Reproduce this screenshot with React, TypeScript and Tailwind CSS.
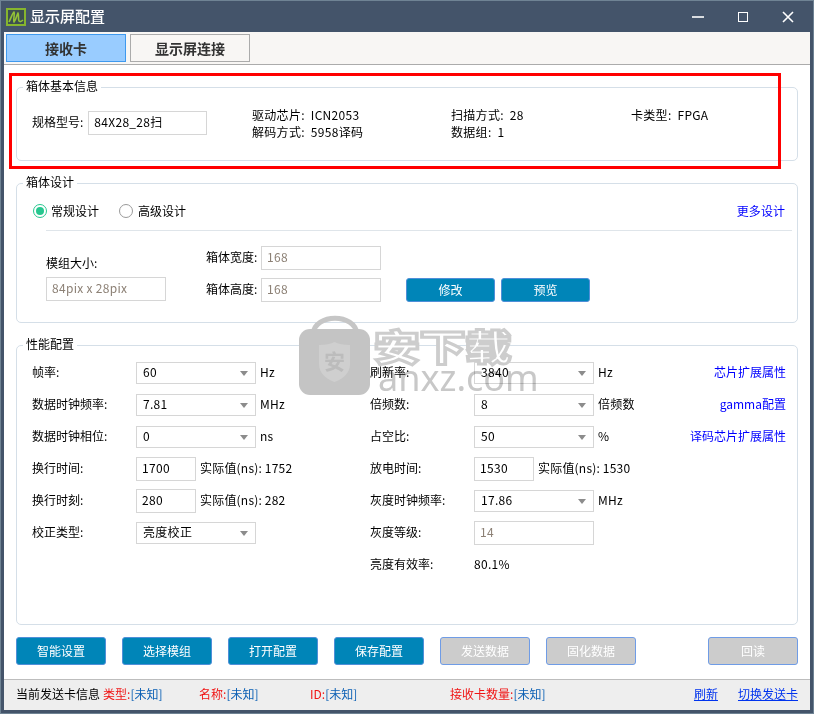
const FONT = "font-['Noto_Sans_CJK_SC','Noto_Sans',sans-serif]";

const Field = ({ value, width, height = "h-6", muted }: { value: string; width: string; height?: string; muted?: boolean }) => (
  <div className={`${width} ${height} flex items-center px-[5px] pb-[2px] border border-[#d6d6d6] bg-white tracking-[0.3px] ${muted ? "text-[#8c8075]" : "text-black"}`}>
    {value}
  </div>
);

const Select = ({ value }: { value: string }) => (
  <div className="w-[120px] h-[22px] flex items-center justify-between pl-[6px] pr-[3px] border border-[#d6d6d6] bg-white tracking-[0.3px]">
    <span className="pb-[2px]">{value}</span>
    <span className="mr-[4px] w-0 h-0 border-x-[4px] border-x-transparent border-t-[5px] border-t-[#8c8c8c]" />
  </div>
);

const Panel = ({ title, className, children }: { title: string; className: string; children: React.ReactNode }) => (
  <section className={`relative ml-[12px] w-[782px] border border-[#d5dfe8] rounded-[5px] ${className}`}>
    <span className="absolute left-[6px] -top-[10px] px-[3px] bg-white leading-[16px]">{title}</span>
    {children}
  </section>
);

const PerfRow = ({ label, control, unit }: { label: string; control: React.ReactNode; unit?: string }) => (
  <div className="h-8 flex items-center">
    <span className="w-[104px] pb-[2px]">{label}</span>
    {control}
    {unit && <span className="ml-[4px] pb-[2px] tracking-[0.2px]">{unit}</span>}
  </div>
);

const ActionButton = ({ label, disabled }: { label: string; disabled?: boolean }) => (
  <button className={`w-[90px] h-[28px] rounded-[3px] border text-white ${disabled ? "bg-[#cccccc] border-[#6f9ce6]" : "bg-[#0085b8] border-[#4f8fd8]"}`}>
    {label}
  </button>
);

const leftRows = [
  { label: "帧率:", select: "60", unit: "Hz" },
  { label: "数据时钟频率:", select: "7.81", unit: "MHz" },
  { label: "数据时钟相位:", select: "0", unit: "ns" },
  { label: "换行时间:", input: "1700", unit: "实际值(ns): 1752" },
  { label: "换行时刻:", input: "280", unit: "实际值(ns): 282" },
  { label: "校正类型:", select: "亮度校正" },
];

const rightRows = [
  { label: "刷新率:", select: "3840", unit: "Hz" },
  { label: "倍频数:", select: "8", unit: "倍频数" },
  { label: "占空比:", select: "50", unit: "%" },
  { label: "放电时间:", input: "1530", unit: "实际值(ns): 1530" },
  { label: "灰度时钟频率:", select: "17.86", unit: "MHz" },
];

const Rows = ({ rows }: { rows: { label: string; select?: string; input?: string; unit?: string }[] }) => (
  <>
    {rows.map((row) => (
      <PerfRow
        key={row.label}
        label={row.label}
        unit={row.unit}
        control={row.select ? <Select value={row.select} /> : <Field value={row.input ?? ""} width="w-[60px]" />}
      />
    ))}
  </>
);

const Unknown = ({ label, className }: { label: string; className?: string }) => (
  <span className={className}>
    <span className="text-[#f01414]">{label}:</span>
    <span className="text-[#0a5fb4]">[未知]</span>
  </span>
);

export default function App() {
  return (
    <div className={`${FONT} relative w-[814px] h-[714px] overflow-hidden bg-[#44546a] text-[12px] text-black flex flex-col pl-[4px] pr-[4px] pb-[4px]`}>
      {/* title bar */}
      <header className="h-8 shrink-0 flex items-center text-white">
        <svg width="20" height="18" viewBox="0 0 20 18" className="ml-[2px] mt-[2px]">
          <rect x="1" y="1" width="18" height="16" fill="#3d4f50" stroke="#86b52e" strokeWidth="2" />
          <path d="M3 14 C5 10 7 4 8 4 C9 5 7 13 8 14 C10 12 11 6 12 5 C13 6 12 12 13 13 C14 14 16 13 17 12" fill="none" stroke="#93c437" strokeWidth="1.600" />
        </svg>
        <span className="ml-[4px] text-[15px] font-medium">显示屏配置</span>
        <div className="ml-auto flex items-center mt-[1px]">
          <svg width="14" height="14" viewBox="0 0 14 14" className="mr-[31px]"><path d="M1 7h12" stroke="#fff" strokeWidth="1.6" /></svg>
          <svg width="14" height="14" viewBox="0 0 14 14" className="mr-[31px]"><rect x="2.5" y="2.5" width="9" height="9" fill="none" stroke="#fff" /></svg>
          <svg width="14" height="14" viewBox="0 0 14 14" className="mr-[15px]"><path d="M2 2l10 10M12 2L2 12" stroke="#fff" strokeWidth="1.6" /></svg>
        </div>
      </header>

      <main className="flex-1 bg-white flex flex-col">
        {/* tabs */}
        <div className="h-[33px] shrink-0 bg-[#f8f6f4] border-b border-[#ababab] flex items-start pt-[2px] pl-[2px] gap-[4px]">
          <button className="w-[120px] h-[28px] bg-[#99ccff] border border-[#3f99ee] text-[14px] font-bold text-[#333]">接收卡</button>
          <button className="w-[120px] h-[28px] bg-[#f8f6f4] border border-[#ababab] text-[14px] font-bold text-[#333]">显示屏连接</button>
        </div>

        <Panel title="箱体基本信息" className="mt-[22px] h-[74px] shrink-0">
          <div className="flex h-full">
            <div className="w-[235px] flex items-center pl-[15px] pb-[2px] gap-[5px]">
              <span className="pb-[2px]">规格型号:</span>
              <Field value="84X28_28扫" width="w-[119px]" />
            </div>
            <div className="w-[199px] pt-[18px] leading-[17px] tracking-[0.3px]">
              <p>驱动芯片:&nbsp;&nbsp;ICN2053</p>
              <p>解码方式:&nbsp;&nbsp;5958译码</p>
            </div>
            <div className="w-[180px] pt-[18px] leading-[17px] tracking-[0.3px]">
              <p>扫描方式:&nbsp;&nbsp;28</p>
              <p>数据组:&nbsp;&nbsp;1</p>
            </div>
            <div className="pt-[18px] leading-[17px] tracking-[0.3px]">
              <p>卡类型:&nbsp;&nbsp;FPGA</p>
            </div>
          </div>
        </Panel>

        <Panel title="箱体设计" className="mt-[22px] h-[140px] shrink-0">
          <div className="h-[46px] mx-[16px] flex items-center pt-[7px]">
            <span className="w-[14px] h-[14px] rounded-full border border-[#27c78f] flex items-center justify-center">
              <span className="w-[8px] h-[8px] rounded-full bg-[#27c78f]" />
            </span>
            <span className="ml-[4px]">常规设计</span>
            <span className="ml-[20px] w-[14px] h-[14px] rounded-full border border-[#9a9a9a]" />
            <span className="ml-[5px]">高级设计</span>
            <span className="ml-auto mr-[-4px] text-[#0000ff] tracking-[0.05px]">更多设计</span>
          </div>
          <div className="ml-[29px] mr-[5px] border-t border-[#dfe5ea]" />
          <div className="flex ml-[29px] pt-[15px]">
            <div className="w-[160px] pt-[9px]">
              <p className="leading-[16px]">模组大小:</p>
              <div className="mt-[6px]"><Field value="84pix x 28pix" width="w-[120px]" muted /></div>
            </div>
            <div className="flex flex-col gap-[8px]">
              <div className="flex items-center gap-[3px]">
                <span className="w-[52px] pb-[2px]">箱体宽度:</span>
                <Field value="168" width="w-[120px]" muted />
              </div>
              <div className="flex items-center gap-[3px]">
                <span className="w-[52px] pb-[2px]">箱体高度:</span>
                <Field value="168" width="w-[120px]" muted />
              </div>
            </div>
            <div className="ml-[25px] mt-[32px] flex gap-[6px] h-6">
              <button className="w-[89px] h-6 rounded-[3px] bg-[#0085b8] border border-[#4f8fd8] text-white">修改</button>
              <button className="w-[89px] h-6 rounded-[3px] bg-[#0085b8] border border-[#4f8fd8] text-white">预览</button>
            </div>
          </div>
        </Panel>

        <Panel title="性能配置" className="mt-[22px] h-[280px] shrink-0">
          <div className="flex pt-[11px] pl-[15px]">
            <div className="w-[338px]">
              <Rows rows={leftRows} />
            </div>
            <div className="w-[344px]">
              <Rows rows={rightRows} />
              <PerfRow label="灰度等级:" control={<Field value="14" width="w-[120px]" muted />} />
              <PerfRow label="亮度有效率:" control={<span className="pb-[2px] tracking-[0.3px]">80.1%</span>} />
            </div>
            <div className="w-[72px] text-[#0000ff] flex flex-col items-end whitespace-nowrap">
              <span className="h-8 flex items-center pb-[2px]">芯片扩展属性</span>
              <span className="h-8 flex items-center pb-[2px]">gamma配置</span>
              <span className="h-8 flex items-center pb-[2px]">译码芯片扩展属性</span>
            </div>
          </div>
        </Panel>

        <div className="mt-[12px] ml-[12px] w-[782px] flex gap-[16px] shrink-0">
          <ActionButton label="智能设置" />
          <ActionButton label="选择模组" />
          <ActionButton label="打开配置" />
          <ActionButton label="保存配置" />
          <ActionButton label="发送数据" disabled />
          <ActionButton label="固化数据" disabled />
          <div className="ml-auto"><ActionButton label="回读" disabled /></div>
        </div>

        <footer className="mt-auto h-[31px] shrink-0 bg-[#eeeeee] border-t border-[#bdbdbd] flex items-center pl-[12px] pb-[2px]">
          <span>当前发送卡信息</span>
          <Unknown label="类型" className="ml-[3px] w-[96px]" />
          <Unknown label="名称" className="w-[111px]" />
          <Unknown label="ID" className="w-[140px]" />
          <Unknown label="接收卡数量" />
          <a className="ml-auto text-[#0033ee] underline">刷新</a>
          <a className="ml-[20px] mr-[12px] text-[#0033ee] underline">切换发送卡</a>
        </footer>
      </main>

      {/* lighter window edge */}
      <div className="absolute inset-0 border border-[#6f8394] pointer-events-none" />

      {/* red annotation over the first panel */}
      <div className="absolute left-[9px] top-[73px] w-[772px] h-[96px] border-[3.5px] border-[#ff0000]" />

      {/* watermark */}
      <div className="absolute left-[299px] top-[314px] w-[220px] h-[84px] pointer-events-none">
        <svg width="72" height="82" viewBox="0 0 72 82" className="absolute left-0 top-0">
          <path d="M14 20 C16 -1 56 -1 58 20" fill="none" stroke="#c6c6c6" strokeWidth="5" />
          <rect x="0" y="15" width="71" height="66" rx="11" fill="#c4c4c4" />
          <path d="M20 31 Q30 31 35.500 28 Q41 31 51 31 V50 Q51 62 35.500 68 Q20 62 20 50Z" fill="#cfcfcf" />
          <text x="35.500" y="55" textAnchor="middle" fontSize="21" fontWeight="700" fill="#bcbcbc">安</text>
        </svg>
        <span className="absolute left-[75px] top-[11px] text-[36px] leading-[40px] font-black text-white [-webkit-text-stroke:3px_#cdcdcd] whitespace-nowrap origin-left scale-x-[1.27]">安下载</span>
        <span className="absolute left-[79px] top-[44px] text-[36px] leading-[40px] text-[#c8c8c8] mix-blend-multiply whitespace-nowrap font-['Noto_Sans',sans-serif]">anxz.com</span>
      </div>
    </div>
  );
}
